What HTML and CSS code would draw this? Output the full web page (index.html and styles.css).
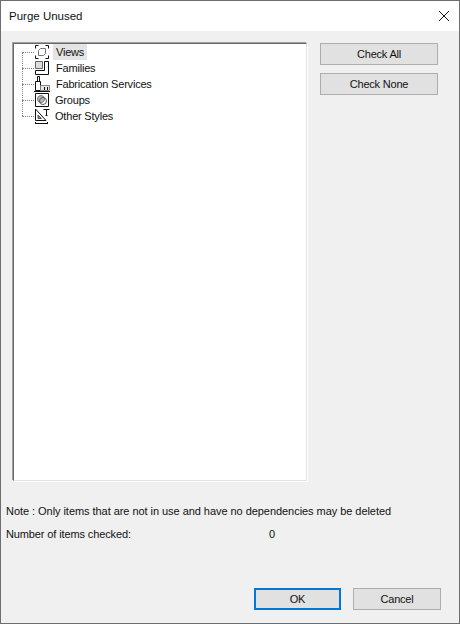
FILE: index.html
```html
<!DOCTYPE html>
<html lang="en">
<head>
    <meta charset="UTF-8">
    <title>Purge Unused</title>
    <link rel="stylesheet" href="styles.css">
</head>
<body>

<div class="dialog">
    <div class="titlebar">
        <span class="title">Purge Unused</span>
        <svg class="close" width="12" height="12" viewBox="0 0 12 12"><path d="M1 1L11 11M11 1L1 11" stroke="#111" stroke-width="1" fill="none"/></svg>
    </div>

    <div class="content">
        <div class="top">
            <!-- Tree of purgeable categories -->
            <ul class="tree">
                <li class="node">
                    <svg class="icon" width="16" height="16" viewBox="0 0 16 16" fill="none" stroke="#111"><path d="M1.5 4.5V1.5H4.5M11.5 1.5H14.5V4.5M14.5 11.5V14.5H11.5M4.5 14.5H1.5V11.5"/><path d="M4.5 6.5L6.5 4.5H11.5V9.5L9.5 11.5H4.5Z" stroke="#777"/></svg>
                    <span class="label selected">Views</span>
                </li>
                <li class="node">
                    <svg class="icon" width="16" height="16" viewBox="0 0 16 16" fill="none" stroke="#111"><path d="M1.5 1.5H8.5V8.5H1.5Z" fill="#ddd" stroke="#666"/><path d="M10.5 1.5H14.5V14.5H1.5V10.5H10.5Z"/></svg>
                    <span class="label">Families</span>
                </li>
                <li class="node">
                    <svg class="icon" width="16" height="16" viewBox="0 0 16 16" fill="none" stroke="#111"><path d="M3.5 5.5V0.5H5.5V5.5M1.5 14.5V5.5H6.5V14.5Z"/><path d="M6.5 9.5H15.5V14.5H6.5" stroke="#888" fill="#e4e4e4"/><path d="M0 15.5H16M10.5 11V14M13.5 11V14"/></svg>
                    <span class="label">Fabrication Services</span>
                </li>
                <li class="node">
                    <svg class="icon" width="16" height="16" viewBox="0 0 16 16" fill="none" stroke="#111"><path d="M1.5 1.5H14.5V14.5H1.5Z"/><circle cx="7" cy="7" r="3.5" fill="#bbb" stroke="#777"/><circle cx="9" cy="9" r="3.5" stroke="#555"/></svg>
                    <span class="label label-tight">Groups</span>
                </li>
                <li class="node">
                    <svg class="icon" width="16" height="16" viewBox="0 0 16 16" fill="none" stroke="#111"><path d="M1.5 1V12.5H12L1.5 1Z"/><path d="M4 7V10.5H7.5Z" fill="#888" stroke="#555"/><path d="M9.5 1.5H15.5M12.5 1.5V7.5M11.5 7.5H13.5"/><path d="M1 15.5H14M1.5 14V16M13.5 14V16"/></svg>
                    <span class="label label-tight">Other Styles</span>
                </li>
            </ul>

            <div class="side-buttons">
                <button class="btn">Check All</button>
                <button class="btn">Check None</button>
            </div>
        </div>

        <p class="note">Note : Only items that are not in use and have no dependencies may be deleted</p>
        <div class="count">
            <span class="count-label">Number of items checked:</span>
            <span>0</span>
        </div>

        <div class="footer">
            <button class="btn btn-default">OK</button>
            <button class="btn btn-cancel">Cancel</button>
        </div>
    </div>
</div>

</body>
</html>
```

FILE: styles.css
```css
html, body {
    margin: 0;
    padding: 0;
}
body {
    width: 460px;
    height: 624px;
    overflow: hidden;
    font-family: "Liberation Sans", Arial, sans-serif;
    font-size: 11px;
    color: #111;
}
.dialog {
    box-sizing: border-box;
    width: 460px;
    height: 624px;
    display: flex;
    flex-direction: column;
    background: #f0f0f0;
    border: 1px solid #6e6e6e;
}
.titlebar {
    height: 30px;
    flex: none;
    display: flex;
    align-items: center;
    justify-content: space-between;
    padding: 0 9px 0 8px;
    background: #fff;
}
.title {
    font-size: 11.5px;
}
.close {
    display: block;
}
.content {
    flex: 1;
    display: flex;
    flex-direction: column;
    padding: 12px 18px 13px 5px;
}
.top {
    display: flex;
    align-items: flex-start;
    gap: 13px;
    margin-left: 7px;
}
.tree {
    box-sizing: border-box;
    width: 294px;
    height: 438px;
    margin: 0;
    padding: 0;
    list-style: none;
    background: #fff;
    border: 1px solid #e3e3e3;
    border-top-color: #696969;
    border-left-color: #696969;
    box-shadow: -1px -1px 0 #a0a0a0, 1px 1px 0 #fff;
    position: relative;
}
/* dotted trunk of the tree */
.tree::before {
    content: "";
    position: absolute;
    left: 8px;
    top: 8px;
    height: 64px;
    border-left: 1px dotted #888;
}
.node {
    height: 16px;
    display: flex;
    align-items: center;
    padding-left: 20px;
    position: relative;
}
.node::before {
    content: "";
    position: absolute;
    left: 8px;
    top: 8px;
    width: 12px;
    border-top: 1px dotted #888;
}
.icon {
    flex: none;
    display: block;
}
.label {
    margin-left: 4px;
    line-height: 16px;
    padding: 0 2px;
    letter-spacing: -0.2px;
    white-space: nowrap;
}
.label-tight {
    margin-left: 3px;
}
.selected {
    margin-left: 3px;
    padding: 0 3px;
    background: #e4e4e4;
}
.side-buttons {
    display: flex;
    flex-direction: column;
    gap: 8px;
}
.btn {
    box-sizing: border-box;
    width: 118px;
    height: 22px;
    padding: 0;
    font: inherit;
    letter-spacing: -0.2px;
    color: #111;
    background: #e1e1e1;
    border: 1px solid #adadad;
}
.note {
    margin: 22px 0 0;
    line-height: 16px;
    letter-spacing: -0.05px;
}
.count {
    display: flex;
    margin-top: 7px;
    line-height: 16px;
}
.count-label {
    width: 263px;
    letter-spacing: -0.12px;
}
.footer {
    display: flex;
    justify-content: flex-end;
    gap: 12px;
    margin-top: auto;
}
.btn-default {
    width: 87px;
    border: 2px solid #0078d7;
}
.btn-cancel {
    width: 88px;
}
```
